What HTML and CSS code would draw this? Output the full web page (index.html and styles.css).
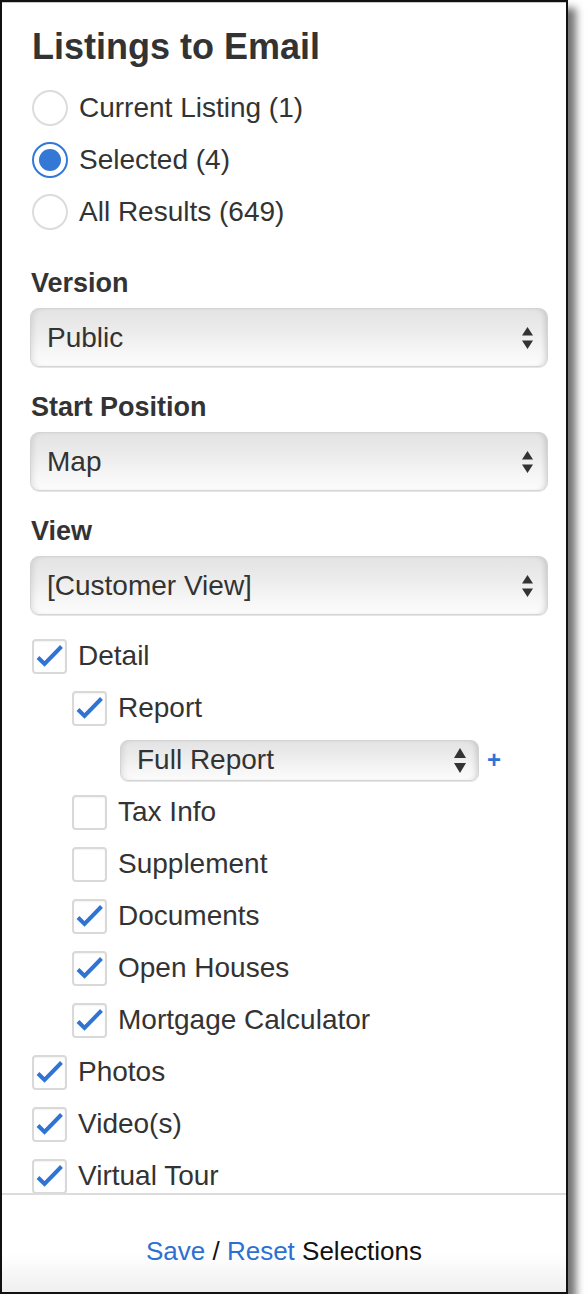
FILE: index.html
```html
<!DOCTYPE html>
<html lang="en">
<head>
<meta charset="utf-8">
<title>Listings to Email</title>
<link rel="stylesheet" href="styles.css">
</head>
<body>
<div class="panel">
  <div class="scroll">
    <h1 class="title">Listings to Email</h1>

    <div class="radios">
      <div class="row"><span class="radio"></span><span class="label">Current Listing (1)</span></div>
      <div class="row"><span class="radio on"></span><span class="label">Selected (4)</span></div>
      <div class="row"><span class="radio"></span><span class="label">All Results (649)</span></div>
    </div>

    <div class="field">
      <div class="field-label">Version</div>
      <div class="select"><span>Public</span><svg class="arrows" width="11" height="22" viewBox="0 0 11 22"><path d="M5.5 0 L11 8.5 L0 8.5 Z M0 13.5 L11 13.5 L5.5 22 Z" fill="#333"/></svg></div>
    </div>
    <div class="field">
      <div class="field-label">Start Position</div>
      <div class="select"><span>Map</span><svg class="arrows" width="11" height="22" viewBox="0 0 11 22"><path d="M5.5 0 L11 8.5 L0 8.5 Z M0 13.5 L11 13.5 L5.5 22 Z" fill="#333"/></svg></div>
    </div>
    <div class="field">
      <div class="field-label">View</div>
      <div class="select"><span>[Customer View]</span><svg class="arrows" width="11" height="22" viewBox="0 0 11 22"><path d="M5.5 0 L11 8.5 L0 8.5 Z M0 13.5 L11 13.5 L5.5 22 Z" fill="#333"/></svg></div>
    </div>

    <div class="checks">
      <div class="row"><span class="cb"><svg viewBox="0 0 31 31" width="31" height="31"><path d="M4 16.5 L10.5 23 L27.5 5.5" fill="none" stroke="#2f74d4" stroke-width="4"/></svg></span><span class="label">Detail</span></div>
      <div class="row l2"><span class="cb"><svg viewBox="0 0 31 31" width="31" height="31"><path d="M4 16.5 L10.5 23 L27.5 5.5" fill="none" stroke="#2f74d4" stroke-width="4"/></svg></span><span class="label">Report</span></div>
      <div class="row l3">
        <div class="select small"><span>Full Report</span><svg class="arrows" width="12" height="25" viewBox="0 0 12 25"><path d="M6 0 L12 10 L0 10 Z M0 15 L12 15 L6 25 Z" fill="#333"/></svg></div>
        <span class="plus">+</span>
      </div>
      <div class="row l2"><span class="cb"></span><span class="label">Tax Info</span></div>
      <div class="row l2"><span class="cb"></span><span class="label">Supplement</span></div>
      <div class="row l2"><span class="cb"><svg viewBox="0 0 31 31" width="31" height="31"><path d="M4 16.5 L10.5 23 L27.5 5.5" fill="none" stroke="#2f74d4" stroke-width="4"/></svg></span><span class="label">Documents</span></div>
      <div class="row l2"><span class="cb"><svg viewBox="0 0 31 31" width="31" height="31"><path d="M4 16.5 L10.5 23 L27.5 5.5" fill="none" stroke="#2f74d4" stroke-width="4"/></svg></span><span class="label">Open Houses</span></div>
      <div class="row l2"><span class="cb"><svg viewBox="0 0 31 31" width="31" height="31"><path d="M4 16.5 L10.5 23 L27.5 5.5" fill="none" stroke="#2f74d4" stroke-width="4"/></svg></span><span class="label">Mortgage Calculator</span></div>
      <div class="row"><span class="cb"><svg viewBox="0 0 31 31" width="31" height="31"><path d="M4 16.5 L10.5 23 L27.5 5.5" fill="none" stroke="#2f74d4" stroke-width="4"/></svg></span><span class="label">Photos</span></div>
      <div class="row"><span class="cb"><svg viewBox="0 0 31 31" width="31" height="31"><path d="M4 16.5 L10.5 23 L27.5 5.5" fill="none" stroke="#2f74d4" stroke-width="4"/></svg></span><span class="label">Video(s)</span></div>
      <div class="row"><span class="cb"><svg viewBox="0 0 31 31" width="31" height="31"><path d="M4 16.5 L10.5 23 L27.5 5.5" fill="none" stroke="#2f74d4" stroke-width="4"/></svg></span><span class="label">Virtual Tour</span></div>
    </div>
  </div>

  <div class="footer">
    <a class="link" href="#">Save</a> / <a class="link" href="#">Reset</a> Selections
  </div>
</div>
</body>
</html>
```

FILE: styles.css
```css
* {
  box-sizing: border-box;
  margin: 0;
  padding: 0;
}

html, body {
  background: #fff;
}

body {
  margin: 0;
  font-family: "Liberation Sans", Arial, Helvetica, sans-serif;
  color: #333;
}

.panel {
  width: 568px;
  height: 1294px;
  border: 2px solid #111;
  background: #fff;
  display: flex;
  flex-direction: column;
  box-shadow: inset 0 1px 0 #c8c8c8, 8px 8px 8px rgba(0, 0, 0, 0.55);
}

.scroll {
  flex: 1;
  overflow: hidden;
  padding: 25px 20px 0 30px;
}

.title {
  font-size: 36px;
  line-height: 40px;
  font-weight: bold;
  color: #333;
  margin-bottom: 15px;
}

.radios {
  margin-bottom: 29px;
}

.row {
  height: 52px;
  display: flex;
  align-items: center;
  gap: 11px;
  font-size: 28px;
  line-height: 32px;
  color: #333;
}

.radio {
  flex: none;
  width: 36px;
  height: 36px;
  border-radius: 50%;
  border: 2px solid #dcdcdc;
  display: flex;
  align-items: center;
  justify-content: center;
  background: #fff;
}

.radio.on {
  border-color: #3478d6;
}

.radio.on::after {
  content: "";
  width: 22px;
  height: 22px;
  border-radius: 50%;
  background: #3478d6;
}

.field + .field {
  margin-top: 24px;
}

.field-label {
  font-size: 27px;
  line-height: 32px;
  font-weight: bold;
  color: #333;
  margin-bottom: 9px;
  margin-left: -1px;
}

.select {
  height: 59px;
  margin: 0 -2px;
  padding: 0 14px 0 16px;
  display: flex;
  align-items: center;
  justify-content: space-between;
  font-size: 28px;
  color: #333;
  border: 1px solid #d4d4d4;
  border-radius: 9px;
  background: linear-gradient(to bottom, #e3e3e3 0%, #ebebeb 35%, #f6f6f6 75%, #fcfcfc 100%);
  box-shadow: inset -5px 0 6px -4px rgba(0, 0, 0, 0.18), inset 5px 0 6px -4px rgba(0, 0, 0, 0.12), 0 1px 0 #e6e6e6;
}

.arrows {
  flex: none;
  display: block;
}

.checks {
  margin-top: 15px;
}

.row.l2 {
  padding-left: 40px;
}

.row.l3 {
  padding-left: 88px;
  gap: 8px;
}

.select.small {
  margin: 0;
  width: 359px;
  height: 41px;
  padding: 0 12px 0 16px;
  border-radius: 8px;
}

.plus {
  font-size: 24px;
  font-weight: bold;
  color: #2f74d4;
  line-height: 24px;
}

.cb {
  flex: none;
  width: 35px;
  height: 35px;
  border: 2px solid #d9d9d9;
  border-radius: 4px;
  background: #fff;
  box-shadow: inset 0 1px 2px rgba(0, 0, 0, 0.05);
}

.cb svg {
  display: block;
}

.footer {
  flex: none;
  height: 99px;
  border-top: 2px solid #dcdcdc;
  padding-top: 41px;
  text-align: center;
  font-size: 26px;
  line-height: 30px;
  color: #111;
  background: linear-gradient(to bottom, #fff 60%, #efefef 100%);
}

.link {
  color: #2c70d2;
  text-decoration: none;
}
```
